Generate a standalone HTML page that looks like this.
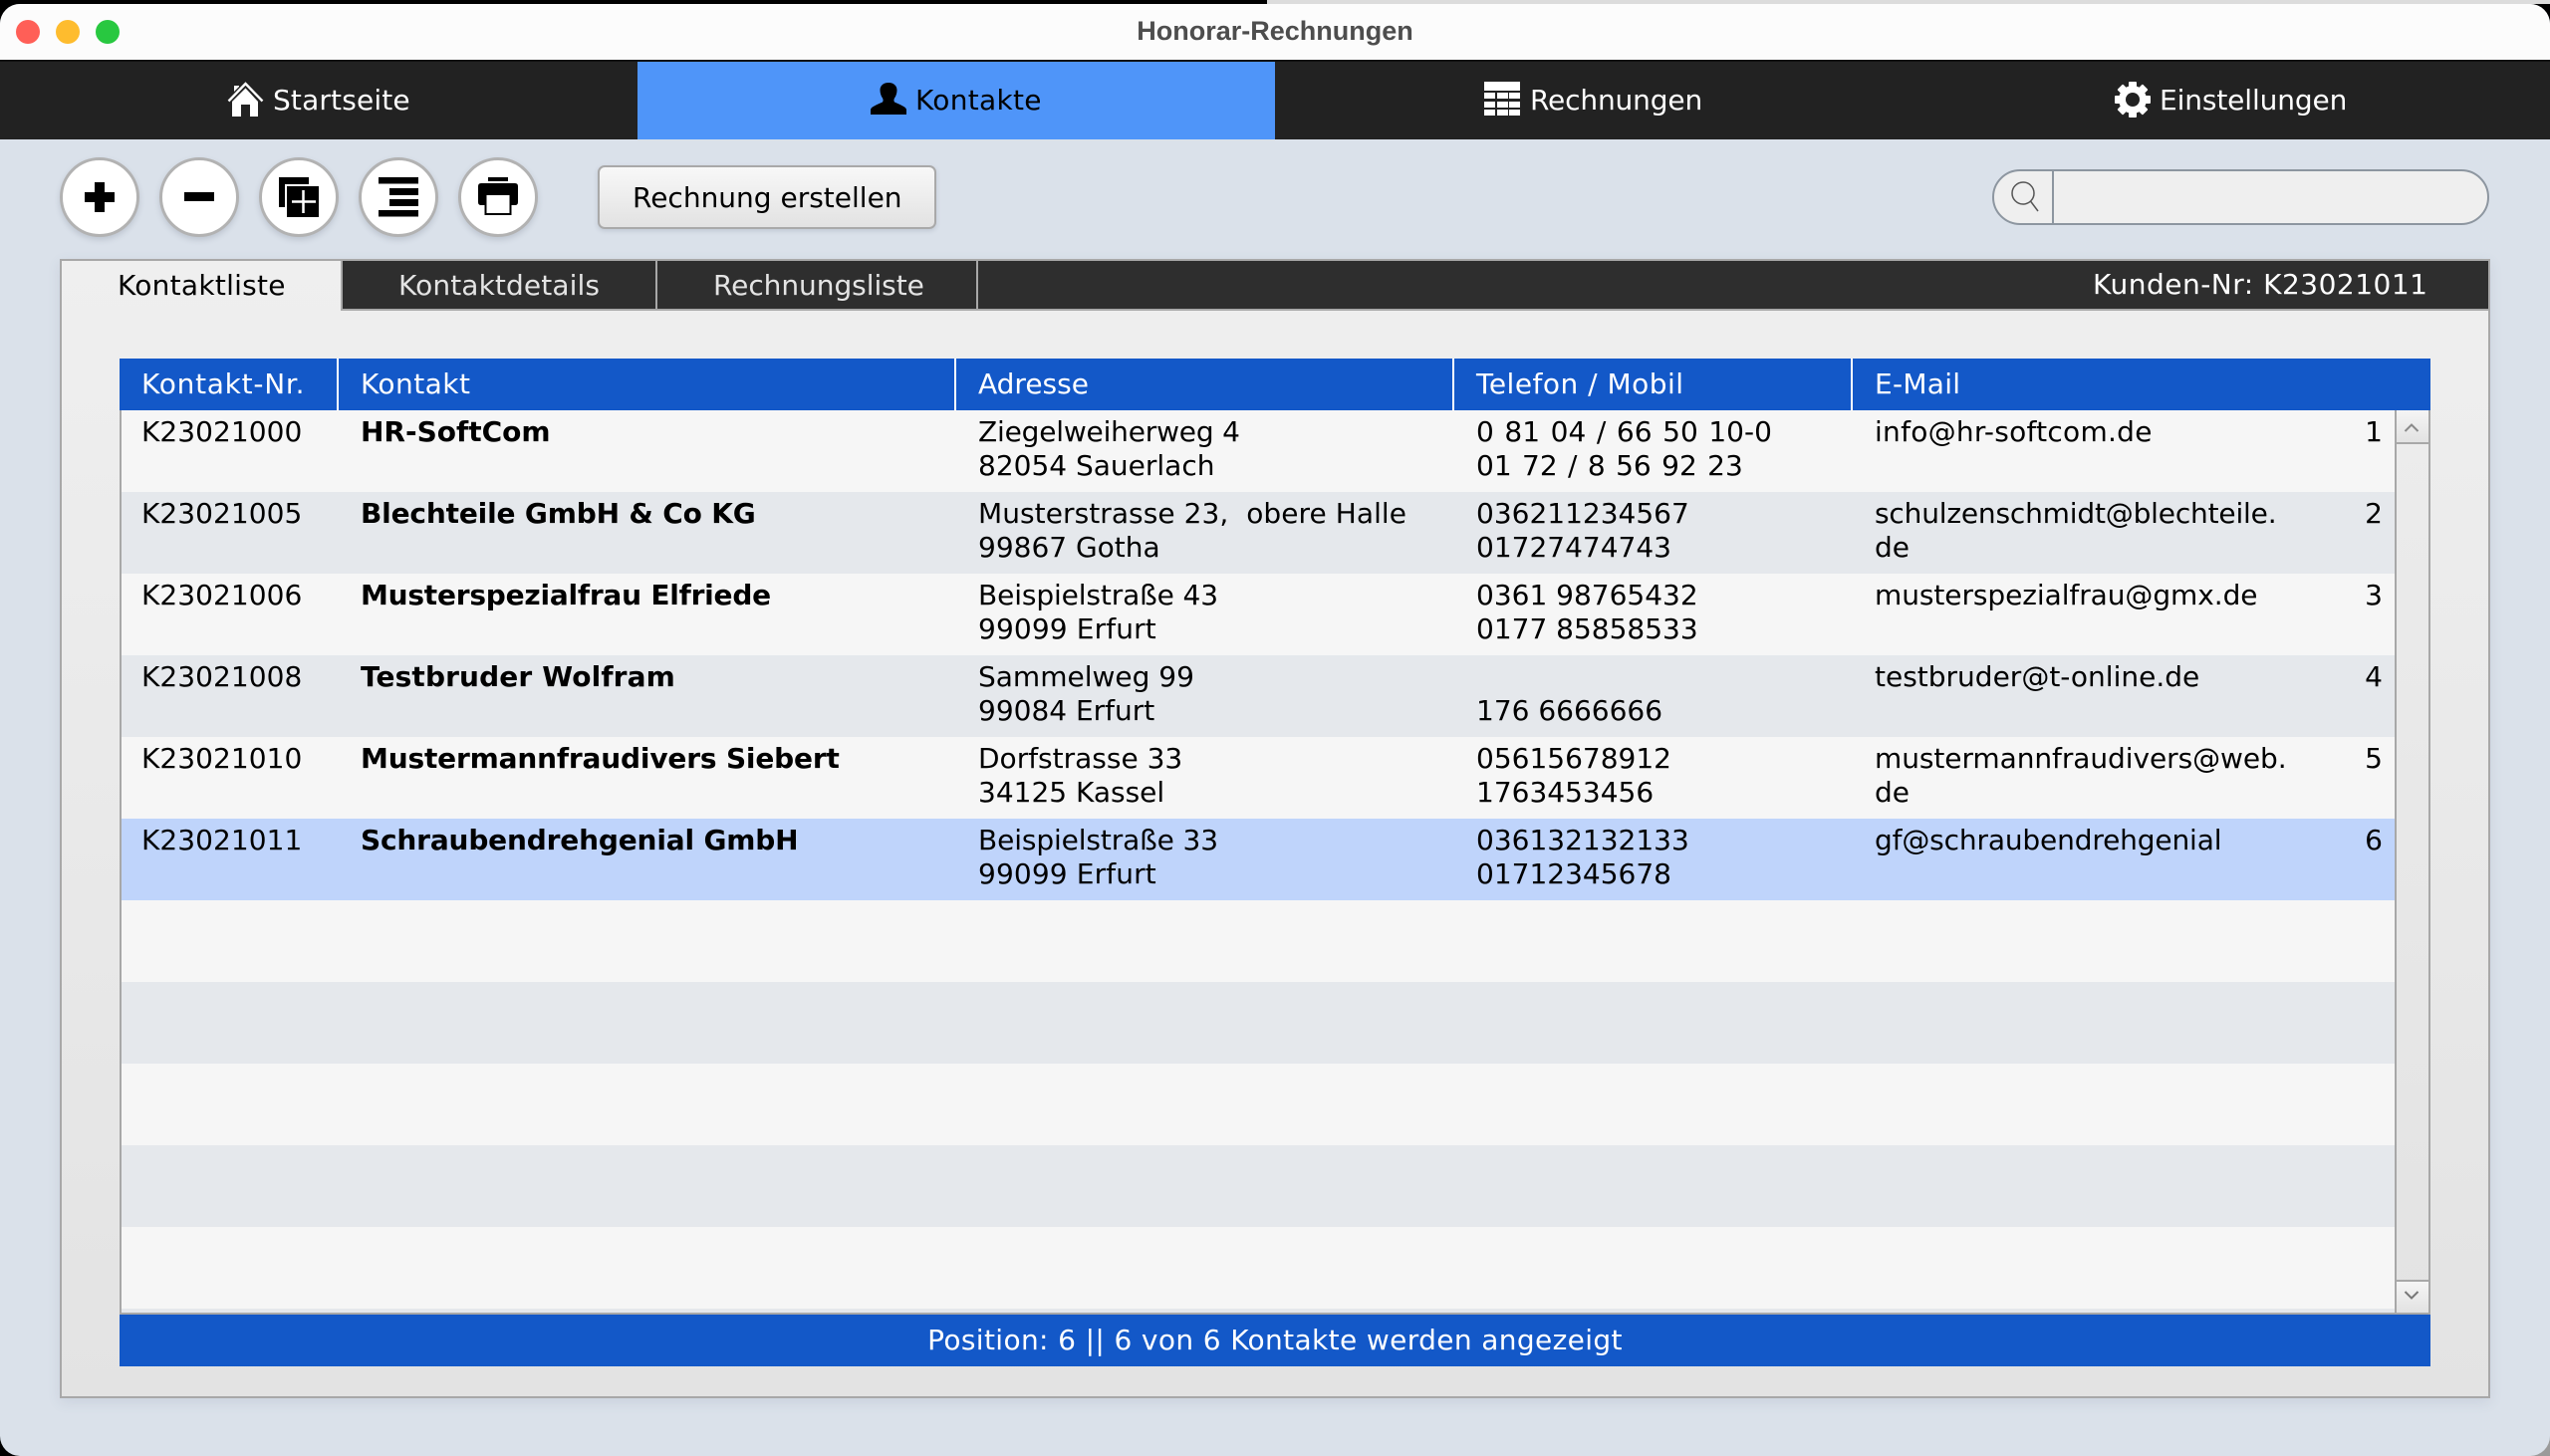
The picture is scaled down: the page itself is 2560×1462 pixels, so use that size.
<!DOCTYPE html>
<html lang="de">
<head>
<meta charset="utf-8">
<title>Honorar-Rechnungen</title>
<style>
html,body{margin:0;padding:0;width:2560px;height:1462px;overflow:hidden;background:#000}
body{position:relative;font-family:"DejaVu Sans","Liberation Sans",sans-serif;font-size:28px;color:#000}
.bgr{position:absolute;left:1272px;right:0;top:0;height:4px;background:#dcdcdc}
.bgb{position:absolute;right:0;top:1400px;width:60px;height:62px;background:#9a9a9a}
.win{position:absolute;left:0;top:4px;width:2560px;height:1458px;background:#dae1ea;border-radius:20px;overflow:hidden}
.win>*{margin-top:-4px}
.a{position:absolute}
.t{position:absolute;white-space:pre;line-height:34px}
.t span{display:block;height:34px}
.tb{position:absolute;left:0;top:4px;width:2560px;height:56px;background:#fcfcfc}
.light{position:absolute;top:20px;width:24px;height:24px;border-radius:50%}
.nav{position:absolute;top:60px;height:80px;width:640px;background:#222}
.nav::before{content:"";position:absolute;left:0;right:0;top:0;height:2px;background:#111}
.rnd{position:absolute;top:158px;width:80px;height:80px;box-sizing:border-box;border-radius:50%;background:#fff;border:3px solid #b2b2b2;box-shadow:0 3px 6px rgba(90,100,120,.22)}
.btn{position:absolute;left:600px;top:166px;width:340px;height:64px;box-sizing:border-box;border:2px solid #a9a9a9;border-radius:7px;background:linear-gradient(#f8f8f8,#e2e2e2);box-shadow:0 2px 5px rgba(90,100,120,.2)}
.pane{position:absolute;left:60px;top:260px;width:2440px;height:1144px;box-sizing:border-box;border:2px solid #a8a8a8;background:linear-gradient(#efefef,#e3e3e3);box-shadow:0 4px 12px rgba(90,100,130,.12)}
.tabbar{position:absolute;left:344px;top:262px;width:2154px;height:48px;background:#2e2e2e}
.tabline{position:absolute;left:342px;top:310px;width:2158px;height:2px;background:#a8a8a8}
.sep{position:absolute;top:260px;width:2px;height:50px;background:#a8a8a8}
.tabt{color:#e4e4e4}
.hdr{position:absolute;left:120px;top:360px;width:2320px;height:52px;background:#1358c8}
.hs{position:absolute;top:360px;width:2px;height:52px;background:#fff}
.ht{color:#fff;top:369px}
.listbg{position:absolute;left:120px;top:412px;width:2284px;height:908px;background:#f6f6f6;overflow:hidden}
.r{position:absolute;left:0;width:2284px;height:82px}
.alt{background:#e5e8ec}
.sel{background:#bfd4fb}
.r .t{top:5px}
.c1{left:22px;letter-spacing:.06px}.c2{left:242px;font-weight:bold}.c3{left:862px}.c4{left:1362px}.c5{left:1762px}
.c6{right:12px;text-align:right}
.lb{position:absolute;left:120px;top:412px;width:2px;height:906px;background:#a8a8a8}
.bb{position:absolute;left:120px;top:1318px;width:2284px;height:2px;background:#a8a8a8}
.sb{position:absolute;left:2404px;top:412px;width:36px;height:908px;box-sizing:border-box;border-left:2px solid #a8a8a8;border-right:2px solid #a8a8a8;background:linear-gradient(#ececec,#e3e3e3)}
.sbb{position:absolute;left:0;width:32px;height:32px;background:linear-gradient(#f5f5f5,#e2e2e2)}
.stat{position:absolute;left:120px;top:1320px;width:2320px;height:52px;background:#1358c8;color:#fff;text-align:center;line-height:52px;letter-spacing:.37px}
.search{position:absolute;left:2000px;top:170px;width:499px;height:56px;box-sizing:border-box;border:2px solid #8d96a0;border-radius:28px;background:#efefef}
</style>
</head>
<body>
<div class="bgr"></div>
<div class="bgb"></div>
<div class="win">
  <div class="tb"></div>
  <div class="light" style="left:16px;background:#ff5f57"></div>
  <div class="light" style="left:56px;background:#febc2e"></div>
  <div class="light" style="left:96px;background:#28c840"></div>
  <div class="t" style="left:0;width:2560px;text-align:center;top:14px;font-family:'Liberation Sans',sans-serif;font-weight:bold;font-size:27px;color:#4d4d4d">Honorar-Rechnungen</div>

  <div class="nav" style="left:0"></div>
  <div class="nav" style="left:640px;background:#4f95f9"></div>
  <div class="nav" style="left:1280px"></div>
  <div class="nav" style="left:1920px"></div>
  <div class="t" style="left:274px;top:84px;color:#fff;letter-spacing:.16px">Startseite</div>
  <div class="t" style="left:919px;top:84px;letter-spacing:.3px">Kontakte</div>
  <div class="t" style="left:1536px;top:84px;color:#fff;letter-spacing:-.15px">Rechnungen</div>
  <div class="t" style="left:2168px;top:84px;color:#fff;letter-spacing:-.12px">Einstellungen</div>

  <div class="rnd" style="left:60px"></div>
  <div class="rnd" style="left:160px"></div>
  <div class="rnd" style="left:260px"></div>
  <div class="rnd" style="left:360px"></div>
  <div class="rnd" style="left:460px"></div>

  <div class="btn"></div>
  <div class="t" style="left:635px;top:182px">Rechnung erstellen</div>

  <div class="search"></div>
  <div class="a" style="left:2060px;top:172px;width:2px;height:52px;background:#8d96a0"></div>

  <div class="pane"></div>
  <div class="tabbar"></div>
  <div class="tabline"></div>
  <div class="sep" style="left:342px;height:52px"></div>
  <div class="sep" style="left:658px"></div>
  <div class="sep" style="left:980px"></div>
  <div class="t" style="left:118px;top:270px;letter-spacing:.27px">Kontaktliste</div>
  <div class="t tabt" style="left:400px;top:270px;letter-spacing:.12px">Kontaktdetails</div>
  <div class="t tabt" style="left:716px;top:270px;letter-spacing:-.05px">Rechnungsliste</div>
  <div class="t" style="left:2101px;top:269px;color:#fff;letter-spacing:.5px">Kunden-Nr: K23021011</div>

  <div class="hdr"></div>
  <div class="hs" style="left:338px"></div>
  <div class="hs" style="left:958px"></div>
  <div class="hs" style="left:1458px"></div>
  <div class="hs" style="left:1858px"></div>
  <div class="t ht" style="left:142px;letter-spacing:.74px">Kontakt-Nr.</div>
  <div class="t ht" style="left:362px;letter-spacing:.46px">Kontakt</div>
  <div class="t ht" style="left:982px">Adresse</div>
  <div class="t ht" style="left:1482px;letter-spacing:.49px">Telefon / Mobil</div>
  <div class="t ht" style="left:1882px;letter-spacing:.27px">E-Mail</div>

  <div class="listbg">
    <div class="r" style="top:0">
      <div class="t c1">K23021000</div><div class="t c2">HR-SoftCom</div>
      <div class="t c3"><span style="letter-spacing:-.19px">Ziegelweiherweg 4</span><span>82054 Sauerlach</span></div>
      <div class="t c4"><span style="word-spacing:1.7px">0 81 04 / 66 50 10-0</span><span style="word-spacing:1.5px">01 72 / 8 56 92 23</span></div>
      <div class="t c5" style="letter-spacing:.27px">info@hr-softcom.de</div><div class="t c6">1</div>
    </div>
    <div class="r alt" style="top:82px">
      <div class="t c1">K23021005</div><div class="t c2" style="letter-spacing:-.17px">Blechteile GmbH &amp; Co KG</div>
      <div class="t c3"><span style="letter-spacing:.06px">Musterstrasse 23,  obere Halle</span><span>99867 Gotha</span></div>
      <div class="t c4"><span>036211234567</span><span>01727474743</span></div>
      <div class="t c5"><span style="letter-spacing:-.18px">schulzenschmidt@blechteile.</span><span>de</span></div><div class="t c6">2</div>
    </div>
    <div class="r" style="top:164px">
      <div class="t c1">K23021006</div><div class="t c2" style="letter-spacing:-.22px">Musterspezialfrau Elfriede</div>
      <div class="t c3"><span style="letter-spacing:-.12px">Beispielstraße 43</span><span style="letter-spacing:.13px">99099 Erfurt</span></div>
      <div class="t c4"><span>0361 98765432</span><span>0177 85858533</span></div>
      <div class="t c5" style="letter-spacing:-.07px">musterspezialfrau@gmx.de</div><div class="t c6">3</div>
    </div>
    <div class="r alt" style="top:246px">
      <div class="t c1">K23021008</div><div class="t c2" style="letter-spacing:.13px">Testbruder Wolfram</div>
      <div class="t c3"><span>Sammelweg 99</span><span>99084 Erfurt</span></div>
      <div class="t c4"><span> </span><span>176 6666666</span></div>
      <div class="t c5">testbruder@t-online.de</div><div class="t c6">4</div>
    </div>
    <div class="r" style="top:328px">
      <div class="t c1">K23021010</div><div class="t c2" style="letter-spacing:-.17px">Mustermannfraudivers Siebert</div>
      <div class="t c3"><span>Dorfstrasse 33</span><span>34125 Kassel</span></div>
      <div class="t c4"><span>05615678912</span><span>1763453456</span></div>
      <div class="t c5"><span style="letter-spacing:-.07px">mustermannfraudivers@web.</span><span>de</span></div><div class="t c6">5</div>
    </div>
    <div class="r sel" style="top:410px">
      <div class="t c1">K23021011</div><div class="t c2" style="letter-spacing:-.17px">Schraubendrehgenial GmbH</div>
      <div class="t c3"><span style="letter-spacing:-.12px">Beispielstraße 33</span><span style="letter-spacing:.13px">99099 Erfurt</span></div>
      <div class="t c4"><span>036132132133</span><span>01712345678</span></div>
      <div class="t c5" style="letter-spacing:-.15px">gf@schraubendrehgenial</div><div class="t c6">6</div>
    </div>
    <div class="r" style="top:492px"></div>
    <div class="r alt" style="top:574px"></div>
    <div class="r" style="top:656px"></div>
    <div class="r alt" style="top:738px"></div>
    <div class="r" style="top:820px"></div>
    <div class="r alt" style="top:902px"></div>
  </div>
  <div class="lb"></div>
  <div class="bb"></div>
  <div class="sb">
    <div class="sbb" style="top:0"></div>
    <div class="a" style="left:0;top:32px;width:32px;height:2px;background:#a8a8a8"></div>
    <div class="a" style="left:0;top:873px;width:32px;height:2px;background:#a8a8a8"></div>
    <div class="sbb" style="top:875px;height:31px"></div>
    <div class="a" style="left:0;top:906px;width:32px;height:2px;background:#a8a8a8"></div>
  </div>
  <div class="stat">Position: 6 || 6 von 6 Kontakte werden angezeigt</div>

  <svg class="a" style="left:0;top:0" width="2560" height="1462" viewBox="0 0 2560 1462">
    <!-- home -->
    <path d="M229.5 101.5L246.5 84L263.5 101.5" fill="none" stroke="#fff" stroke-width="2.4"/>
    <path d="M235 92V86H240V87L235 92Z" fill="#fff"/>
    <path d="M233 117V102L246.5 88.5L259 102V117H251V105H242V117Z" fill="#fff"/>
    <!-- person -->
    <path d="M874 115V110C874.500 107 881 105 886 102.500C887 101 886.500 99.500 886 98.500C884.500 96.500 883.500 93.500 883.500 90.500C883.500 86 887 83 892 83C897 83 900.500 86 900.500 90.500C900.500 93.500 899.500 96.500 898 98.500C897.500 99.500 897 101 898 102.500C903 105 909.500 107 910 110V115Z" fill="#000"/>
    <!-- table -->
    <g fill="#fff">
      <rect x="1490" y="82" width="36" height="9"/>
      <rect x="1490" y="93" width="11" height="6"/><rect x="1503" y="93" width="11" height="6"/><rect x="1515" y="93" width="11" height="6"/>
      <rect x="1490" y="102" width="11" height="6"/><rect x="1503" y="102" width="11" height="6"/><rect x="1515" y="102" width="11" height="6"/>
      <rect x="1490" y="110" width="11" height="6"/><rect x="1503" y="110" width="11" height="6"/><rect x="1515" y="110" width="11" height="6"/>
    </g>
    <!-- gear -->
    <g fill="#fff">
      <circle cx="2141" cy="100" r="14"/>
      <rect x="2137" y="82" width="8" height="36" rx="1"/>
      <rect x="2137" y="82" width="8" height="36" rx="1" transform="rotate(45 2141 100)"/>
      <rect x="2137" y="82" width="8" height="36" rx="1" transform="rotate(90 2141 100)"/>
      <rect x="2137" y="82" width="8" height="36" rx="1" transform="rotate(135 2141 100)"/>
    </g>
    <circle cx="2141" cy="100" r="7" fill="#222"/>
    <!-- plus -->
    <path d="M95 183H105V193H115V203H105V213H95V203H85V193H95Z" fill="#000"/>
    <!-- minus -->
    <rect x="185" y="193" width="30" height="9" fill="#000"/>
    <!-- duplicate -->
    <path d="M280 178H310V185H286V208H280Z" fill="#000"/>
    <rect x="286" y="185" width="36" height="35" fill="#fff"/>
    <rect x="288" y="187" width="32" height="31" fill="#000"/>
    <path d="M293 202.500H317M304.500 191V214" stroke="#fff" stroke-width="2.500" fill="none"/>
    <!-- lines -->
    <g fill="#000">
      <rect x="380" y="178" width="40" height="6.500"/>
      <rect x="391" y="189" width="29" height="7"/>
      <rect x="391" y="200" width="29" height="7"/>
      <rect x="380" y="211" width="40" height="6.500"/>
    </g>
    <!-- printer -->
    <rect x="490" y="178" width="20" height="4" fill="#000"/>
    <path d="M483 184H517Q520 184 520 187V203Q520 206 517 206H483Q480 206 480 203V187Q480 184 483 184Z" fill="#000"/>
    <rect x="487.500" y="195" width="25" height="20" fill="#fff" stroke="#000" stroke-width="2"/>
    <!-- search -->
    <circle cx="2031" cy="194" r="11" fill="none" stroke="#555" stroke-width="1.500"/>
    <path d="M2038.500 202L2046 212" fill="none" stroke="#555" stroke-width="1.500"/>
    <!-- scroll arrows -->
    <path d="M2414.500 433L2421 426.500L2427.500 433" fill="none" stroke="#8a8a8a" stroke-width="2"/>
    <path d="M2414.500 1297L2421 1303.500L2427.500 1297" fill="none" stroke="#777" stroke-width="2"/>
  </svg>
</div>
</body>
</html>
